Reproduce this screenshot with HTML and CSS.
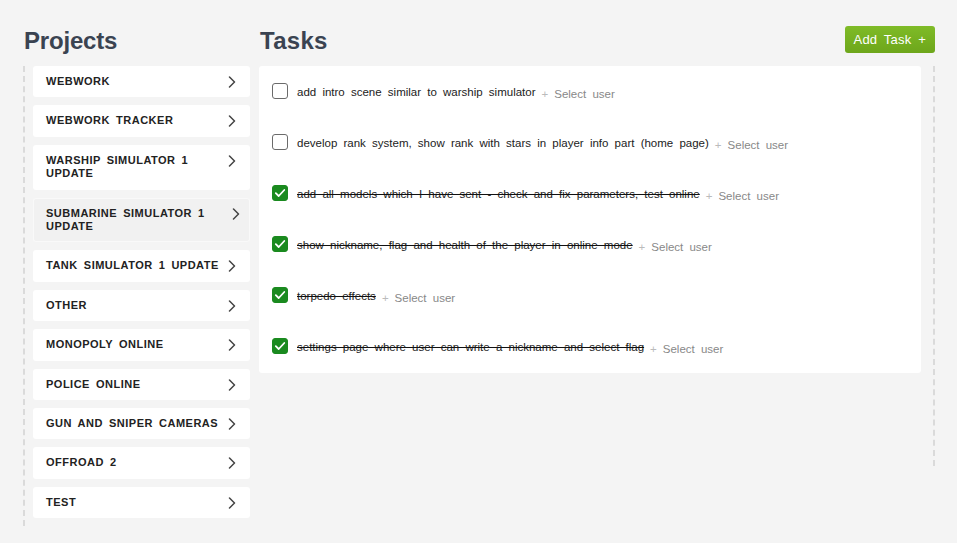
FILE: index.html
```html
<!DOCTYPE html>
<html lang="en">
<head>
<meta charset="utf-8">
<title>Projects &amp; Tasks</title>
<link rel="stylesheet" href="styles.css">
</head>
<body>
<div class="page">
  <section class="projects">
    <div class="col-head">
      <h1 class="title">Projects</h1>
    </div>
    <ul class="project-list">
      <li class="project"><span class="project-name">Webwork</span><svg class="chev" viewBox="0 0 8 12" width="8" height="12"><path d="M1.5 1 L6.5 6 L1.5 11" /></svg></li>
      <li class="project"><span class="project-name">Webwork Tracker</span><svg class="chev" viewBox="0 0 8 12" width="8" height="12"><path d="M1.5 1 L6.5 6 L1.5 11" /></svg></li>
      <li class="project"><span class="project-name">Warship Simulator 1 Update</span><svg class="chev" viewBox="0 0 8 12" width="8" height="12"><path d="M1.5 1 L6.5 6 L1.5 11" /></svg></li>
      <li class="project active"><span class="project-name">Submarine Simulator 1 Update</span><svg class="chev" viewBox="0 0 8 12" width="8" height="12"><path d="M1.5 1 L6.5 6 L1.5 11" /></svg></li>
      <li class="project"><span class="project-name">Tank Simulator 1 Update</span><svg class="chev" viewBox="0 0 8 12" width="8" height="12"><path d="M1.5 1 L6.5 6 L1.5 11" /></svg></li>
      <li class="project"><span class="project-name">Other</span><svg class="chev" viewBox="0 0 8 12" width="8" height="12"><path d="M1.5 1 L6.5 6 L1.5 11" /></svg></li>
      <li class="project"><span class="project-name">Monopoly Online</span><svg class="chev" viewBox="0 0 8 12" width="8" height="12"><path d="M1.5 1 L6.5 6 L1.5 11" /></svg></li>
      <li class="project"><span class="project-name">Police Online</span><svg class="chev" viewBox="0 0 8 12" width="8" height="12"><path d="M1.5 1 L6.5 6 L1.5 11" /></svg></li>
      <li class="project"><span class="project-name">Gun and Sniper Cameras</span><svg class="chev" viewBox="0 0 8 12" width="8" height="12"><path d="M1.5 1 L6.5 6 L1.5 11" /></svg></li>
      <li class="project"><span class="project-name">Offroad 2</span><svg class="chev" viewBox="0 0 8 12" width="8" height="12"><path d="M1.5 1 L6.5 6 L1.5 11" /></svg></li>
      <li class="project"><span class="project-name">Test</span><svg class="chev" viewBox="0 0 8 12" width="8" height="12"><path d="M1.5 1 L6.5 6 L1.5 11" /></svg></li>
    </ul>
  </section>

  <section class="tasks">
    <div class="col-head">
      <h1 class="title">Tasks</h1>
      <button class="add-btn" type="button">Add Task +</button>
    </div>
    <div class="tasks-body">
      <ul class="task-panel">
        <li class="task">
          <span class="box"></span>
          <span class="task-text"><span class="label">add intro scene similar to warship simulator</span><span class="assign"><span class="plus">+</span>Select user</span></span>
        </li>
        <li class="task">
          <span class="box"></span>
          <span class="task-text"><span class="label">develop rank system, show rank with stars in player info part (home page)</span><span class="assign"><span class="plus">+</span>Select user</span></span>
        </li>
        <li class="task done">
          <span class="box"><svg viewBox="0 0 16 16" width="16" height="16"><path d="M3.8 8.2 L6.7 11 L12.3 5" /></svg></span>
          <span class="task-text"><span class="label">add all models which I have sent - check and fix parameters, test online</span><span class="assign"><span class="plus">+</span>Select user</span></span>
        </li>
        <li class="task done">
          <span class="box"><svg viewBox="0 0 16 16" width="16" height="16"><path d="M3.8 8.2 L6.7 11 L12.3 5" /></svg></span>
          <span class="task-text"><span class="label">show nickname, flag and health of the player in online mode</span><span class="assign"><span class="plus">+</span>Select user</span></span>
        </li>
        <li class="task done">
          <span class="box"><svg viewBox="0 0 16 16" width="16" height="16"><path d="M3.8 8.2 L6.7 11 L12.3 5" /></svg></span>
          <span class="task-text"><span class="label">torpedo effects</span><span class="assign"><span class="plus">+</span>Select user</span></span>
        </li>
        <li class="task done">
          <span class="box"><svg viewBox="0 0 16 16" width="16" height="16"><path d="M3.8 8.2 L6.7 11 L12.3 5" /></svg></span>
          <span class="task-text"><span class="label">settings page where user can write a nickname and select flag</span><span class="assign"><span class="plus">+</span>Select user</span></span>
        </li>
      </ul>
    </div>
  </section>
</div>
</body>
</html>
```

FILE: styles.css
```css
* {
  box-sizing: border-box;
}

html, body {
  margin: 0;
  padding: 0;
}

body {
  background: #f4f4f4;
  font-family: "Liberation Sans", Arial, sans-serif;
  color: #222;
  width: 957px;
  height: 543px;
  overflow: hidden;
}

.page {
  display: flex;
  align-items: flex-start;
  gap: 9px;
  padding: 26px 0 0 23px;
}

.col-head {
  display: flex;
  justify-content: space-between;
  align-items: flex-start;
  height: 29px;
  margin-bottom: 11px;
}

.title {
  margin: 1px 0 0 0;
  font-size: 24px;
  line-height: 28px;
  font-weight: bold;
  color: #3a4351;
}

.projects {
  width: 227px;
}

.projects .title {
  margin-left: 1px;
  letter-spacing: -0.2px;
}

.project-list {
  list-style: none;
  margin: 0;
  padding: 0 0 8px 8px;
  border-left: 2px dashed #dadada;
  display: flex;
  flex-direction: column;
  gap: 8px;
}

.project {
  display: flex;
  align-items: flex-start;
  justify-content: space-between;
  background: #fff;
  border-radius: 3px;
  padding: 9px 14px 9px 13px;
}

.project.active {
  background: #f1f1f1;
  box-shadow: inset 0 0 0 1px #f9f9f9;
}

.project.active .chev {
  margin-right: -4px;
}

.project-name {
  font-size: 11px;
  line-height: 13.4px;
  font-weight: bold;
  text-transform: uppercase;
  letter-spacing: 0.5px;
  word-spacing: 2.5px;
  color: #222;
  max-width: 178px;
}

.chev {
  flex: none;
  margin-top: 1px;
  fill: none;
  stroke: #444;
  stroke-width: 1.5;
  stroke-linecap: round;
  stroke-linejoin: round;
}

.tasks {
  width: 676px;
}

.tasks .title {
  margin-left: 1px;
  letter-spacing: 0.3px;
}

.add-btn {
  height: 27px;
  padding: 0 9px;
  border: 0;
  border-radius: 3px;
  background: linear-gradient(#7fbb27, #6da61b);
  color: #fff;
  font-family: "Liberation Sans", Arial, sans-serif;
  font-size: 13px;
  line-height: 27px;
  word-spacing: 3px;
  letter-spacing: 0.2px;
  cursor: pointer;
}

.tasks-body {
  min-height: 400px;
  padding-right: 12px;
  border-right: 2px dashed #dadada;
}

.task-panel {
  list-style: none;
  margin: 0;
  background: #fff;
  border-radius: 3px;
  padding: 17px 13px;
  display: flex;
  flex-direction: column;
  gap: 33px;
}

.task {
  display: flex;
  align-items: flex-start;
  gap: 9px;
  height: 18px;
}

.box {
  flex: none;
  width: 16px;
  height: 16px;
  border: 1px solid #6b6b6b;
  border-radius: 3px;
  background: #fff;
  display: flex;
  align-items: center;
  justify-content: center;
}

.task.done .box {
  border-color: #1a8a1f;
  background: #1a8a1f;
}

.box svg {
  flex: none;
  fill: none;
  stroke: #fff;
  stroke-width: 1.8;
  stroke-linecap: round;
  stroke-linejoin: round;
}

.task-text {
  font-size: 11.5px;
  line-height: 18px;
  height: 18px;
  word-spacing: 3px;
  color: #222;
  white-space: nowrap;
}

.task.done .label {
  text-decoration: line-through;
  text-decoration-color: #111;
}

.assign {
  margin-left: 6px;
  color: #888;
  vertical-align: -1.5px;
}

.plus {
  color: #bbb;
  margin-right: 6px;
}
```
